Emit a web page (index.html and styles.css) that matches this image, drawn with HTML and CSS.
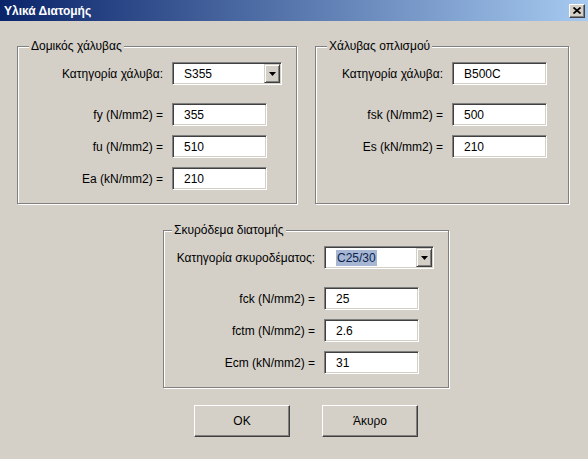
FILE: index.html
```html
<!DOCTYPE html>
<html lang="el">
<head>
    <meta charset="UTF-8">
    <title>Υλικά Διατομής</title>
    <link rel="stylesheet" href="styles.css">
</head>
<body>
    <div class="window">
        <div class="titlebar">
            <span class="title">Υλικά Διατομής</span>
            <button class="close-btn" type="button">
                <svg width="8" height="7" viewBox="0 0 8 7">
                    <path d="M0.5 0.5 L7.5 6.5 M7.5 0.5 L0.5 6.5" stroke="#000" stroke-width="1.7" fill="none"/>
                </svg>
            </button>
        </div>

        <div class="client">
            <div class="top-row">
                <!-- Structural steel -->
                <fieldset class="group group-steel">
                    <legend>Δομικός χάλυβας</legend>
                    <div class="form-grid">
                        <label class="first">Κατηγορία χάλυβα:</label>
                        <div class="combo first">
                            <span class="combo-text">S355</span>
                            <span class="combo-btn">
                                <svg width="7" height="4" viewBox="0 0 7 4"><polygon points="0,0 7,0 3.5,4" fill="#000"/></svg>
                            </span>
                        </div>

                        <label>fy (N/mm2) =</label>
                        <input class="field" type="text" value="355">

                        <label>fu (N/mm2) =</label>
                        <input class="field" type="text" value="510">

                        <label>Ea (kN/mm2) =</label>
                        <input class="field" type="text" value="210">
                    </div>
                </fieldset>

                <!-- Reinforcement steel -->
                <fieldset class="group group-rebar">
                    <legend>Χάλυβας οπλισμού</legend>
                    <div class="form-grid">
                        <label class="first">Κατηγορία χάλυβα:</label>
                        <input class="field first" type="text" value="B500C">

                        <label>fsk (N/mm2) =</label>
                        <input class="field" type="text" value="500">

                        <label>Es (kN/mm2) =</label>
                        <input class="field" type="text" value="210">
                    </div>
                </fieldset>
            </div>

            <!-- Concrete -->
            <fieldset class="group group-concrete">
                <legend>Σκυρόδεμα διατομής</legend>
                <div class="form-grid">
                    <label class="first">Κατηγορία σκυροδέματος:</label>
                    <div class="combo first">
                        <span class="combo-text"><span class="selected">C25/30</span></span>
                        <span class="combo-btn">
                            <svg width="7" height="4" viewBox="0 0 7 4"><polygon points="0,0 7,0 3.5,4" fill="#000"/></svg>
                        </span>
                    </div>

                    <label>fck (N/mm2) =</label>
                    <input class="field" type="text" value="25">

                    <label>fctm (N/mm2) =</label>
                    <input class="field" type="text" value="2.6">

                    <label>Ecm (kN/mm2) =</label>
                    <input class="field" type="text" value="31">
                </div>
            </fieldset>

            <div class="buttons">
                <button class="btn" type="button">OK</button>
                <button class="btn" type="button">Άκυρο</button>
            </div>
        </div>
    </div>
</body>
</html>
```

FILE: styles.css
```css
/* General */
body {
    margin: 0;
    background: #d4d0c8;
    font-family: "Liberation Sans", Arial, sans-serif;
    font-size: 12px;
    color: #000;
}

.window {
    width: 588px;
    height: 459px;
    overflow: hidden;
}

/* Title bar */
.titlebar {
    height: 21px;
    box-sizing: border-box;
    padding: 0 3px 0 4px;
    display: flex;
    align-items: center;
    justify-content: space-between;
    background: linear-gradient(to right, #0a246a, #a6caf0);
}

.title {
    color: #fff;
    font-weight: bold;
    font-size: 12px;
}

.close-btn {
    width: 16px;
    height: 14px;
    padding: 0;
    box-sizing: border-box;
    background: #d4d0c8;
    border: 1px solid;
    border-color: #fff #404040 #404040 #fff;
    box-shadow: inset -1px -1px #808080;
    display: flex;
    align-items: center;
    justify-content: center;
}

/* Client area */
.client {
    padding: 18px 0 0 17px;
}

.top-row {
    display: flex;
    gap: 18px;
}

/* Group boxes */
.group {
    margin: 0;
    padding: 9px 0 0 0;
    height: 165px;
    box-sizing: border-box;
    min-width: 0;
    border: 1px solid #808080;
    box-shadow: inset 1px 1px #fff, 1px 1px #fff;
}

.group legend {
    margin-left: 11px;
    padding: 0 2px;
    line-height: 14px;
    background: #d4d0c8;
}

.group-steel { width: 280px; --label-w: 145px; }
.group-rebar { width: 254px; --label-w: 127px; }

.group-concrete {
    width: 286px;
    margin: 19px 0 0 146px;
    --label-w: 151px;
}

.group-concrete legend {
    margin-left: 8px;
}

/* Form rows */
.form-grid {
    display: grid;
    grid-template-columns: var(--label-w) auto;
    column-gap: 9px;
    row-gap: 9px;
    justify-content: start;
    align-items: center;
}

.form-grid label {
    text-align: right;
    white-space: nowrap;
    line-height: 14px;
}

.form-grid .first {
    margin-bottom: 9px;
}

/* Sunken text field */
.field {
    width: 95px;
    height: 23px;
    box-sizing: border-box;
    margin: 0;
    padding: 0 0 0 11px;
    font-family: inherit;
    font-size: 12px;
    color: #000;
    background: #fff;
    border: 1px solid;
    border-color: #808080 #fff #fff #808080;
    box-shadow: inset 1px 1px #404040, inset -1px -1px #d4d0c8;
    outline: none;
}

/* Combo box */
.combo {
    width: 110px;
    height: 23px;
    box-sizing: border-box;
    display: flex;
    align-items: center;
    background: #fff;
    border: 1px solid;
    border-color: #808080 #fff #fff #808080;
    box-shadow: inset 1px 1px #404040, inset -1px -1px #d4d0c8;
}

.combo-text {
    flex: 1;
    padding-left: 11px;
}

.combo-text .selected {
    background: #a6b6d3;
    color: #0b1f4f;
    padding: 1px 1px;
}

.combo-btn {
    width: 16px;
    align-self: stretch;
    margin: 1px;
    box-sizing: border-box;
    background: #d4d0c8;
    border: 1px solid;
    border-color: #d4d0c8 #404040 #404040 #d4d0c8;
    box-shadow: inset 1px 1px #fff, inset -1px -1px #808080;
    display: flex;
    align-items: center;
    justify-content: center;
}

/* Dialog buttons */
.buttons {
    display: flex;
    gap: 32px;
    margin: 17px 0 0 177px;
}

.btn {
    width: 96px;
    height: 32px;
    padding: 0;
    font-family: inherit;
    font-size: 12px;
    color: #000;
    background: #d4d0c8;
    border: 1px solid;
    border-color: #fff #404040 #404040 #fff;
    box-shadow: inset -1px -1px #808080;
}
```
